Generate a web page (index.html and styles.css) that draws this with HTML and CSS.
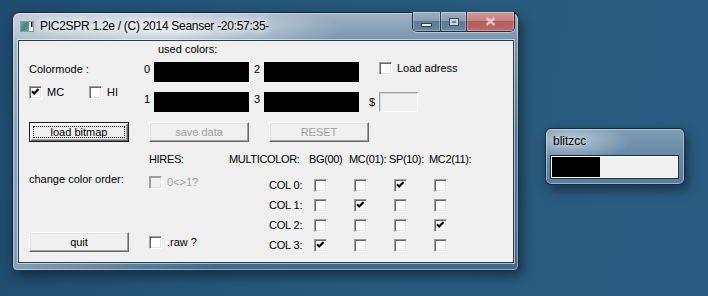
FILE: index.html
```html
<!DOCTYPE html>
<html lang="en">
<head>
    <meta charset="UTF-8">
    <title>PIC2SPR</title>
    <link rel="stylesheet" href="styles.css">
</head>
<body>
<div class="desktop">

<!-- main dialog -->
<div class="window main">
    <div class="titlebar">
        <svg class="app-icon" width="16" height="16" viewBox="0 0 16 16">
            <defs>
                <linearGradient id="ig" x1="0" y1="0" x2="1" y2="1">
                    <stop offset="0" stop-color="#7c98a8"/>
                    <stop offset="0.5" stop-color="#3f8a80"/>
                    <stop offset="1" stop-color="#6aa0b0"/>
                </linearGradient>
            </defs>
            <rect x="1.5" y="3.5" width="13" height="10" fill="#f4f6f6" stroke="#8d9aa4"/>
            <rect x="2" y="4" width="8" height="9" fill="url(#ig)"/>
            <rect x="12" y="4" width="1.5" height="5" fill="#111"/>
        </svg>
        <span class="title">PIC2SPR 1.2e / (C) 2014 Seanser -20:57:35-</span>
        <div class="caption">
            <span class="cap min">
                <svg width="11" height="4" viewBox="0 0 11 4"><rect x="0.5" y="0.5" width="10" height="3" fill="#f4f7fa" stroke="#2c4257"/></svg>
            </span>
            <span class="cap max">
                <svg width="10" height="8" viewBox="0 0 10 8">
                    <rect x="0" y="0" width="10" height="8" fill="#3a5064"/>
                    <rect x="1" y="1" width="8" height="6" fill="#c9d3dc"/>
                    <rect x="3" y="3" width="4" height="2" fill="#6f889d"/>
                </svg>
            </span>
            <span class="cap close">
                <svg width="11" height="9" viewBox="0 0 11 9">
                    <path d="M1.5 1 L9.5 8 M9.5 1 L1.5 8" stroke="#f3dada" stroke-width="2.4" opacity="0.8"/>
                </svg>
            </span>
        </div>
    </div>

    <div class="client">
        <div class="top">
            <div class="mode">
                <div class="mode-label">Colormode :</div>
                <div class="mode-opts">
                    <label class="opt mc"><span class="cb"><svg class="tick" viewBox="0 0 11 11"><path d="M2 4.2 L4.2 6.4 L8.6 2"/></svg></span>MC</label>
                    <label class="opt"><span class="cb"></span>HI</label>
                </div>
            </div>
            <div class="colors">
                <div class="used">used colors:</div>
                <div class="swatch-row">
                    <span class="num">0</span><span class="swatch"></span>
                    <span class="num n2">2</span><span class="swatch"></span>
                    <label class="opt load"><span class="cb"></span>Load adress</label>
                </div>
                <div class="swatch-row second">
                    <span class="num">1</span><span class="swatch"></span>
                    <span class="num n2">3</span><span class="swatch"></span>
                    <span class="dollar">$</span><span class="addr"></span>
                </div>
            </div>
        </div>

        <div class="buttons">
            <button class="btn default"><span class="focus">load bitmap</span></button>
            <button class="btn" disabled>save data</button>
            <button class="btn" disabled>RESET</button>
        </div>

        <div class="heads">
            <span class="h-hires">HIRES:</span>
            <span class="h-multi">MULTICOLOR:</span>
            <span class="h-col">BG(00)</span>
            <span class="h-col">MC(01):</span>
            <span class="h-col">SP(10):</span>
            <span class="h-col">MC2(11):</span>
        </div>

        <div class="bottom">
            <div class="col-left">
                <div class="order">change color order:</div>
                <button class="btn quit">quit</button>
            </div>
            <div class="col-hires">
                <label class="opt dis"><span class="cb"></span>0&lt;&gt;1?</label>
                <label class="opt raw"><span class="cb"></span>.raw ?</label>
            </div>
            <div class="matrix">
                <div class="mrow">
                    <span class="mlabel">COL 0:</span>
                    <span class="cell"><span class="cb"></span></span>
                    <span class="cell"><span class="cb"></span></span>
                    <span class="cell"><span class="cb"><svg class="tick" viewBox="0 0 11 11"><path d="M2 4.2 L4.2 6.4 L8.6 2"/></svg></span></span>
                    <span class="cell"><span class="cb"></span></span>
                </div>
                <div class="mrow">
                    <span class="mlabel">COL 1:</span>
                    <span class="cell"><span class="cb"></span></span>
                    <span class="cell"><span class="cb"><svg class="tick" viewBox="0 0 11 11"><path d="M2 4.2 L4.2 6.4 L8.6 2"/></svg></span></span>
                    <span class="cell"><span class="cb"></span></span>
                    <span class="cell"><span class="cb"></span></span>
                </div>
                <div class="mrow">
                    <span class="mlabel">COL 2:</span>
                    <span class="cell"><span class="cb"></span></span>
                    <span class="cell"><span class="cb"></span></span>
                    <span class="cell"><span class="cb"></span></span>
                    <span class="cell"><span class="cb"><svg class="tick" viewBox="0 0 11 11"><path d="M2 4.2 L4.2 6.4 L8.6 2"/></svg></span></span>
                </div>
                <div class="mrow">
                    <span class="mlabel">COL 3:</span>
                    <span class="cell"><span class="cb"><svg class="tick" viewBox="0 0 11 11"><path d="M2 4.2 L4.2 6.4 L8.6 2"/></svg></span></span>
                    <span class="cell"><span class="cb"></span></span>
                    <span class="cell"><span class="cb"></span></span>
                    <span class="cell"><span class="cb"></span></span>
                </div>
            </div>
        </div>
    </div>
</div>

<!-- small progress window -->
<div class="window blitz">
    <div class="blitz-title">blitzcc</div>
    <div class="progress"><div class="bar" style="width: 38%"></div></div>
</div>

</div>
</body>
</html>
```

FILE: styles.css
```css
* {
    box-sizing: border-box;
}

body {
    margin: 0;
    width: 708px;
    height: 296px;
    overflow: hidden;
    font-family: "Liberation Sans", Arial, sans-serif;
    font-size: 11px;
    line-height: 13px;
    color: #000;
}

.desktop {
    position: relative;
    width: 708px;
    height: 296px;
    background: linear-gradient(100deg, #1f4c6d 0%, #275a7d 55%, #2a5d81 100%);
}

/* aero style window frame */
.window {
    position: absolute;
    border: 1px solid rgba(12, 24, 36, 0.85);
    border-radius: 7px 7px 5px 5px;
    box-shadow: inset 0 0 0 1px rgba(255, 255, 255, 0.4), 3px 5px 12px rgba(0, 0, 0, 0.45);
}

.main {
    left: 12px;
    top: 12px;
    width: 507px;
    height: 259px;
    padding: 0 4px 7px 5px;
    background:
        radial-gradient(ellipse 180px 28px at 150px 16px, rgba(255, 255, 255, 0.8), rgba(255, 255, 255, 0)),
        linear-gradient(90deg, rgba(255, 255, 255, 0.35), rgba(255, 255, 255, 0) 40%),
        linear-gradient(180deg, #9fb3c4 0%, #7391aa 12%, #4b7697 45%, #3e6c91 100%);
}

.titlebar {
    display: flex;
    align-items: flex-start;
    height: 27px;
}

.app-icon {
    margin: 5px 0 0 1px;
    flex-shrink: 0;
}

.title {
    margin: 6px 0 0 5px;
    font-size: 12px;
    line-height: 15px;
    letter-spacing: -0.28px;
    white-space: nowrap;
    text-shadow: 0 0 6px #fff, 0 0 10px #fff, 0 0 14px rgba(255, 255, 255, 0.8);
}

.caption {
    display: flex;
    height: 20px;
    margin: -1px -1px 0 auto;
    border: 1px solid rgba(20, 35, 50, 0.9);
    border-top: none;
    border-radius: 0 0 5px 5px;
    overflow: hidden;
    box-shadow: 0 1px 0 rgba(255, 255, 255, 0.45);
}

.cap {
    display: flex;
    align-items: center;
    justify-content: center;
    height: 100%;
    border-left: 1px solid rgba(20, 35, 50, 0.8);
    background: linear-gradient(180deg, #9cafbf 0%, #879db0 45%, #5f7b94 50%, #6a87a0 100%);
    box-shadow: inset 0 0 0 1px rgba(255, 255, 255, 0.3);
}

.cap.min {
    width: 27px;
    border-left: none;
}

.cap.min svg {
    margin-top: 6px;
}

.cap.max {
    width: 26px;
}

.cap.close {
    width: 48px;
    background: linear-gradient(180deg, #d09a9a 0%, #c58080 45%, #b35c5c 50%, #bd6b6b 100%);
}

/* dialog client area */
.client {
    height: 223px;
    border: 1px solid #2b3b4b;
    background: #f0f0f0;
    padding-left: 10px;
    box-shadow: 0 0 0 1px rgba(255, 255, 255, 0.55);
}

.top {
    display: flex;
}

.mode {
    width: 115px;
    padding-top: 22px;
}

.mode-opts {
    display: flex;
    margin-top: 10px;
}

.opt {
    display: flex;
    align-items: center;
    gap: 5px;
    white-space: nowrap;
}

.opt.mc {
    width: 60px;
}

.cb {
    display: flex;
    align-items: center;
    justify-content: center;
    flex-shrink: 0;
    width: 13px;
    height: 13px;
    background: #fff;
    border: 1px solid;
    border-color: #a0a0a0 #fff #fff #a0a0a0;
    box-shadow: inset 1px 1px 0 #696969, inset -1px -1px 0 #e3e3e3;
}

.tick {
    width: 11px;
    height: 11px;
}

.tick path {
    fill: none;
    stroke: #000;
    stroke-width: 2.1;
}

.opt.dis {
    color: #a0a0a0;
}

.opt.dis .cb {
    background: #f0f0f0;
    box-shadow: inset 1px 1px 0 #a0a0a0, inset -1px -1px 0 #e3e3e3;
}

.used {
    margin: 2px 0 6px 14px;
    height: 13px;
}

.swatch-row {
    display: flex;
    align-items: flex-start;
    height: 20px;
}

.swatch-row.second {
    margin-top: 10px;
}

.num {
    width: 10px;
    margin-top: 1px;
}

.num.n2 {
    margin-left: 5px;
}

.swatch {
    width: 95px;
    height: 20px;
    background: #000;
}

.opt.load {
    margin-left: 20px;
}

.dollar {
    width: 10px;
    margin-left: 10px;
    align-self: center;
    color: #000;
}

.addr {
    width: 39px;
    height: 20px;
    background: #f0f0f0;
    border: 1px solid;
    border-color: #a0a0a0 #fff #fff #a0a0a0;
    box-shadow: inset 1px 1px 0 #d4d4d4;
}

/* classic buttons */
.buttons {
    display: flex;
    gap: 20px;
    margin-top: 10px;
}

.btn {
    display: flex;
    align-items: center;
    justify-content: center;
    width: 100px;
    height: 20px;
    padding: 0;
    font: inherit;
    color: #000;
    background: #f0f0f0;
    border: 1px solid;
    border-color: #fff #696969 #696969 #fff;
    box-shadow: inset -1px -1px 0 #a0a0a0, inset 1px 1px 0 #e3e3e3;
}

.btn:disabled {
    color: #a0a0a0;
}

.btn.default {
    padding: 3px;
    border: 1px solid #1a1a1a;
    box-shadow: inset 1px 1px 0 #fff, inset -1px -1px 0 #696969, inset -2px -2px 0 #a0a0a0;
}

.focus {
    display: flex;
    align-items: center;
    justify-content: center;
    width: 100%;
    height: 100%;
    border: 1px dotted #000;
}

.heads {
    display: flex;
    margin-top: 11px;
    padding-left: 120px;
    white-space: nowrap;
    letter-spacing: -0.35px;
}

.h-hires,
.h-multi {
    width: 80px;
}

.h-col {
    width: 40px;
}

.bottom {
    display: flex;
}

.col-left {
    width: 120px;
    padding-top: 7px;
}

.btn.quit {
    margin-top: 46px;
}

.col-hires {
    width: 120px;
}

.col-hires .opt.dis {
    margin-top: 10px;
}

.col-hires .opt.raw {
    margin-top: 47px;
}

.matrix {
    padding-top: 9px;
}

.mrow {
    display: flex;
    align-items: center;
    height: 20px;
}

.mlabel {
    width: 45px;
    letter-spacing: -0.2px;
}

.cell {
    width: 40px;
}

/* progress window */
.blitz {
    left: 545px;
    top: 128px;
    width: 140px;
    height: 57px;
    padding: 0 5px 0 4px;
    border-radius: 6px;
    background:
        radial-gradient(ellipse 60px 20px at 25px 12px, rgba(255, 255, 255, 0.45), rgba(255, 255, 255, 0)),
        linear-gradient(180deg, #7f9cb3 0%, #6689a7 50%, #557fa1 100%);
}

.blitz-title {
    margin: 5px 0 0 3px;
    font-size: 12px;
    line-height: 15px;
    text-shadow: 0 0 6px rgba(255, 255, 255, 0.8);
}

.progress {
    width: 129px;
    height: 24px;
    margin-top: 6px;
    padding: 1px;
    background: #f0f0f0;
    border: 1px solid #1e2e3e;
    box-shadow: inset 0 0 0 1px #fbfbfb;
}

.bar {
    height: 100%;
    background: #000;
}
```
